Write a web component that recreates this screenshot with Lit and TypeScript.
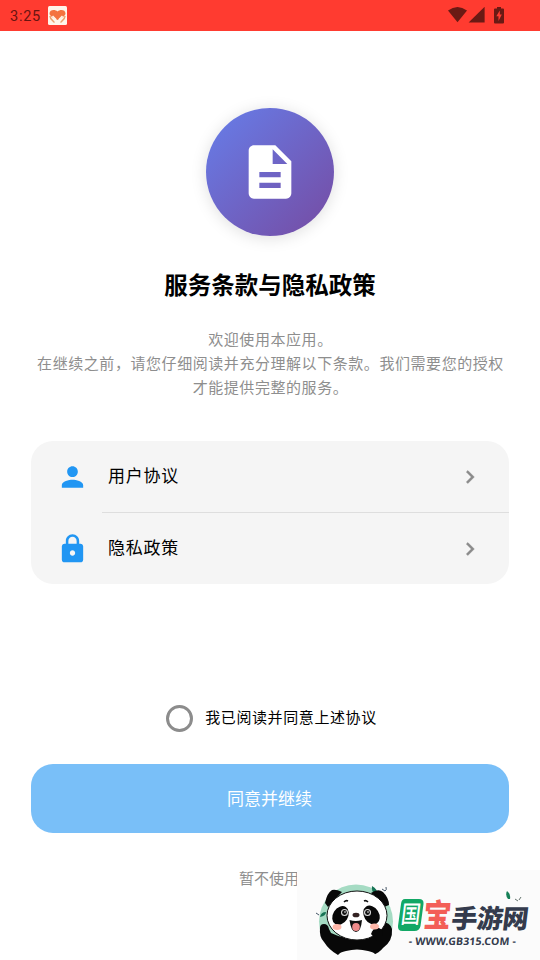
import { LitElement, html, css, svg } from "lit";
import { customElement, property, state } from "lit/decorators.js";

const person = svg`<path d="M12 12c2.21 0 4-1.79 4-4s-1.79-4-4-4-4 1.79-4 4 1.79 4 4 4zm0 2c-2.67 0-8 1.34-8 4v2h16v-2c0-2.66-5.33-4-8-4z"/>`;
const lock = svg`<path d="M18 8h-1V6c0-2.76-2.24-5-5-5S7 3.24 7 6v2H6c-1.1 0-2 .9-2 2v10c0 1.1.9 2 2 2h12c1.1 0 2-.9 2-2V10c0-1.1-.9-2-2-2zm-6 9c-1.1 0-2-.9-2-2s.9-2 2-2 2 .9 2 2-.9 2-2 2zm3.1-9H8.9V6c0-1.71 1.39-3.1 3.1-3.1s3.1 1.39 3.1 3.1z"/>`;

@customElement("status-bar")
class StatusBar extends LitElement {
  static styles = css`
    :host { display: flex; align-items: center; height: 31px; padding: 0 34px 0 10px; background: #ff3b30; box-sizing: border-box; }
    .time { font: 400 14.500px/31px Roboto, sans-serif; letter-spacing: .75px; color: #6a1410; width: 38px; padding-top: 1px; }
    svg { display: block; flex: none; }
    .gap { flex: 1; }
  `;
  render() {
    return html`
      <span class="time">3:25</span>
      <svg width="19" height="19" viewBox="0 0 19 19">
        <rect width="19" height="19" rx="1.500" fill="#fff5ea"/>
        <path d="M9.500 14C6 12 1.500 10 1.500 7.500c0-4 5.500-4.500 8-2 2.500-2.500 8-2 8 2 0 2.500-4.500 4.500-8 6.500z" fill="#f4733f"/>
        <path d="M2 10c0 3 2 4 4.500 6.500M17 10c0 3-2 4-4.500 6.500" stroke="#eda06c" stroke-width="1.500" fill="none"/>
        <path d="M4.500 10l3 3v3M14.500 10l-3 3v3" stroke="#fff5ea" stroke-width="1.600" fill="none"/>
      </svg>
      <span class="gap"></span>
      <svg width="58" height="18" viewBox="448 7 58 18" fill="#6a1a14">
        <path d="M448 10.500Q457.500 3.500 467 10.500L457.500 22.300z"/>
        <path d="M484.600 6.800V22.500H468.600z"/>
        <path fill-rule="evenodd" d="M497 7h4v1.500h2q1 0 1 1V22.500q0 1-1 1h-8q-1 0-1-1V9.500q0-1 1-1h2zM499.800 10.500L496.300 16.300h2.200v4.700l3.300-6.500h-2z"/>
      </svg>`;
  }
}

@customElement("policy-row")
class PolicyRow extends LitElement {
  @property() label = "";
  @property() icon = "person";
  static styles = css`
    :host { display: flex; align-items: center; height: 71px; padding: 0 26px 0 28px; }
    .icon { width: 27px; height: 32px; fill: #2196f3; flex: none; }
    .label { flex: 1; margin: 0 0 4px 22px; font-size: 17px; letter-spacing: .75px; color: #000; }
    .chev { width: 26px; height: 26px; fill: #8a8a8a; stroke: #8a8a8a; stroke-width: .4; flex: none; }
  `;
  render() {
    return html`
      <svg class="icon" viewBox="2 0 20 24">${this.icon === "lock" ? lock : person}</svg>
      <span class="label">${this.label}</span>
      <svg class="chev" viewBox="0 0 24 24"><path d="M10 6L8.590 7.410 13.170 12l-4.580 4.590L10 18l6-6z"/></svg>`;
  }
}

@customElement("site-mark")
class SiteMark extends LitElement {
  static styles = css`
    :host { display: block; background: #fbfbfb; }
    svg { display: block; }
    text { font-family: "Noto Sans CJK SC", sans-serif; font-weight: 900; }
    .url { font-family: "Noto Sans", sans-serif; font-weight: 700; }
    .inner { font-weight: 500; }
  `;
  render() {
    return html`
      <svg width="243" height="90" viewBox="297 870 243 90">
        <circle cx="356" cy="921.500" r="37" fill="#a5dbc3"/>
        <path d="M375 894q-4-3-3-8q6 3 5 9zM320 917q1-5 6-5q0 4-6 5" fill="#167354"/>
        <path d="M382 889l3 2q2-1 1-4M316 913l3 2" stroke="#456" fill="none"/>
        <path d="M325 903q2-10 7-13q4-1 10 2l-14 15zM371 893q7-5 12-1q6 6 6 13l-5 2z" fill="#080808"/>
        <path d="M320 928q0-4 4-4q4 0 5 5l2 4q26 12 48-1l-3-4q1-6 6-6q8 0 10 7q1 12-9 19q-4 5-10 7h-35q-9-5-14-13q-5-5-4-14z" fill="#080808"/>
        <ellipse cx="357" cy="915.500" rx="30" ry="24.500" fill="#fff" stroke="#111" stroke-width="1"/>
        <path d="M371 934q2-7 8-6q5 2 3 8l-5 5z" fill="#080808"/>
        <path d="M338 955q2-3 8-4q11-3 22 0q6 1 8 4v5h-38z" fill="#fbfbfb"/>
        <ellipse cx="340.500" cy="915.500" rx="7.500" ry="10" transform="rotate(32 340.500 915.500)" fill="#080808"/>
        <ellipse cx="371.500" cy="915" rx="7.500" ry="10" transform="rotate(-32 371.500 915)" fill="#080808"/>
        <circle cx="344.500" cy="912.500" r="3.500" fill="#ddd"/><circle cx="344.500" cy="912.500" r="2.400" fill="#111"/><circle cx="345" cy="912" r=".8" fill="#fff"/>
        <circle cx="367.500" cy="912.500" r="3.500" fill="#ddd"/><circle cx="367.500" cy="912.500" r="2.400" fill="#111"/><circle cx="368" cy="912" r=".8" fill="#fff"/>
        <path d="M344 902q2-2 4-1M364 901q2-1 4 1" stroke="#111" stroke-width="1.600" fill="none"/>
        <ellipse cx="356" cy="915" rx="3.500" ry="2.300" fill="#322"/>
        <path d="M349.500 920q6 2 12.500 0q-1 12-6 12t-6.500-12" fill="#111"/>
        <ellipse cx="356" cy="927" rx="3.800" ry="4" fill="#ef8b8b"/>
        <ellipse cx="337" cy="927" rx="4.500" ry="3" fill="#ffb7a9"/>
        <ellipse cx="374.500" cy="926.500" rx="4.500" ry="3" fill="#ffb7a9"/>
        <path d="M405 899h14q5 0 4.500 5l-3 22q-1 5-6 5h-12q-5 0-4.500-5l3-22q.5-5 4-5z" fill="#12a866"/>
        <text class="inner" transform="translate(400.300 923) skewX(-7) scale(.84 1.060)" font-size="23" fill="#fff">国</text>
        <text transform="translate(422.500 927) skewX(-5) scale(.96 1.100)" font-size="29" fill="#f35e57">宝</text>
        <text transform="translate(450.500 928) skewX(-7)" font-size="26" fill="#343b4d" textLength="77">手游网</text>
        <path d="M508 899q-3-4-1-8q4 3 3 8" fill="#168057"/>
        <path d="M515 899l3 2M519 900l2-3" stroke="#65756f" fill="none"/>
        <text class="url" transform="translate(408.500 945) skewX(-5)" font-size="10.500" fill="#343b4d" textLength="107">- WWW.GB315.COM -</text>
      </svg>`;
  }
}

@customElement("app-root")
class AppRoot extends LitElement {
  @state() agreed = false;
  static styles = css`
    :host { display: flex; flex-direction: column; position: relative; height: 960px; overflow: hidden; background: #fff; font-family: "Noto Sans CJK SC", sans-serif; font-weight: 400; }
    main { display: flex; flex-direction: column; align-items: center; padding: 77px 31px 0; }
    .hero { display: flex; align-items: center; justify-content: center; width: 128px; height: 128px; border-radius: 50%; background: linear-gradient(135deg, #667eea, #764ba2); box-shadow: 0 2px 16px rgba(0,0,0,.13); }
    .hero svg { width: 64px; height: 64px; fill: #fff; }
    h1 { margin: 31px 0 0; font-size: 23.500px; line-height: 34px; font-weight: 700; color: #000; }
    .intro { margin: 26px 0 0; padding-left: 1px; font-size: 15px; letter-spacing: .56px; line-height: 24px; text-align: center; color: #8e8e8e; white-space: nowrap; }
    .card { align-self: stretch; margin-top: 42px; border-radius: 22px; background: #f5f5f5; overflow: hidden; }
    .line { height: 1px; margin-left: 71px; background: #dedede; }
    .agree { display: flex; align-items: center; gap: 12px; margin: 120px 0 0 3px; height: 28px; font-size: 15px; letter-spacing: .6px; color: #000; }
    .agree span:last-child { padding-bottom: 3px; }
    .radio { width: 27px; height: 27px; box-sizing: border-box; border: 3px solid #8c8c8c; border-radius: 50%; }
    .go { align-self: stretch; margin: 32px 0 0; height: 69px; border: 0; padding: 0 1px 2px 0; border-radius: 22px; background: #79bff8; color: #fff; font: 400 17px "Noto Sans CJK SC", sans-serif; }
    .skip { margin: 33px 2px 0 0; font-size: 15px; line-height: 24px; color: #8e8e8e; }
    site-mark { position: absolute; right: 0; bottom: 0; }
  `;
  render() {
    return html`
      <status-bar></status-bar>
      <main>
        <div class="hero"><svg viewBox="0 0 24 24"><path d="M14 2H6c-1.100 0-1.990.9-1.990 2L4 20c0 1.100.89 2 1.990 2H18c1.100 0 2-.9 2-2V8l-6-6zm2 16H8v-2h8v2zm0-4H8v-2h8v2zm-3-5V3.500L18.500 9H13z"/></svg></div>
        <h1>服务条款与隐私政策</h1>
        <p class="intro">欢迎使用本应用。<br>在继续之前，请您仔细阅读并充分理解以下条款。我们需要您的授权<br>才能提供完整的服务。</p>
        <div class="card">
          <policy-row icon="person" label="用户协议"></policy-row>
          <div class="line"></div>
          <policy-row icon="lock" label="隐私政策"></policy-row>
        </div>
        <div class="agree"><span class="radio"></span><span>我已阅读并同意上述协议</span></div>
        <button class="go">同意并继续</button>
        <div class="skip">暂不使用</div>
      </main>
      <site-mark></site-mark>`;
  }
}
